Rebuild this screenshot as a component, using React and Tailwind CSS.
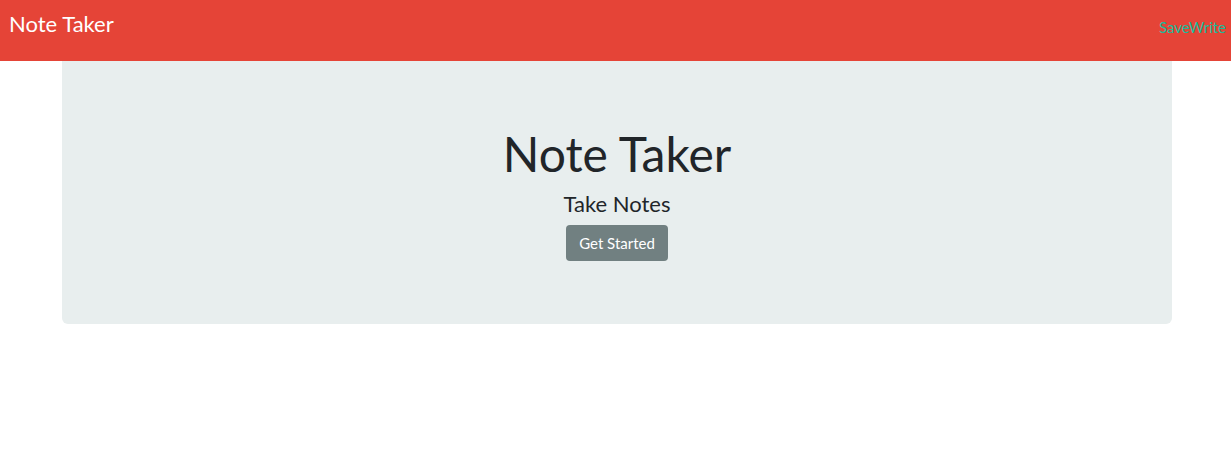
import React from 'react';

export default function App() {
  return (
    <div className="min-h-[453px] bg-white" style={{ fontFamily: 'Lato, "Liberation Sans", sans-serif' }}>
      {/* Navbar */}
      <nav className="h-[61px] bg-[#e54437] flex justify-between">
        <a className="pl-[9px] pt-[11px] text-[22px] leading-[26px] text-white">Note Taker</a>
        <a className="pr-[5px] pt-[17px] text-[15px] leading-[20px] text-[#18bc9c]">SaveWrite</a>
      </nav>

      {/* Jumbotron */}
      <div className="ml-[62px] w-[1110px]">
        <div className="h-[263px] bg-[#e8eeee] rounded-b-[6px] flex flex-col items-center pt-[64px] text-[#212529]">
          <h1 className="text-[48px] leading-[58px]">Note Taker</h1>
          <p className="text-[22px] leading-[26px] mt-[8px]">Take Notes</p>
          <button className="mt-[8px] w-[102px] h-[36px] rounded-[4px] bg-[#718081] text-white text-[15px]">
            Get Started
          </button>
        </div>
      </div>
    </div>
  );
}
